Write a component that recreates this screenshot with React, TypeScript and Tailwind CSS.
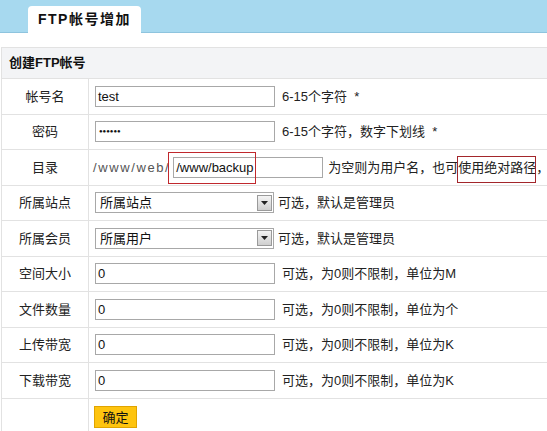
import React from "react";

const font = {
  fontFamily: '"Liberation Sans", "Noto Sans CJK SC", sans-serif',
};

function Label({ text }: { text: string }) {
  return (
    <div className="flex items-center justify-center border-r border-[#e2e2e2] text-[13px] text-[#222]">
      {text}
    </div>
  );
}

function TextInput({ value, w = "w-[180px]", password = false }: { value: string; w?: string; password?: boolean }) {
  return (
    <div className={`flex h-[21px] ${w} items-center border border-[#a8a8a8] bg-white px-[2px] text-[13px] text-[#111]`}>
      {password ? <span className="pl-[1px] text-[6px] tracking-[0px]">●●●●●●</span> : value}
    </div>
  );
}

function Select({ value }: { value: string }) {
  return (
    <div className="flex h-[21px] w-[179px] items-center justify-between border border-[#a8a8a8] bg-white pl-[4px] pr-[1px] text-[13px] text-[#111]">
      <span>{value}</span>
      <span className="flex h-[16px] w-[15px] items-center justify-center border border-[#9a9a9a] bg-gradient-to-b from-[#f4f4f4] to-[#cfcfcf]">
        <svg width="7" height="4" viewBox="0 0 7 4">
          <path d="M0 0h7L3.5 4z" fill="#222" />
        </svg>
      </span>
    </div>
  );
}

function Row({ label, children }: { label: string; children: React.ReactNode }) {
  return (
    <div className="grid h-[35.5px] grid-cols-[87px_1fr] border-b border-[#e2e2e2]">
      <Label text={label} />
      <div className="flex items-center pl-[6px] text-[13px] text-[#222]">{children}</div>
    </div>
  );
}

function Hint({ children }: { children: React.ReactNode }) {
  return <span className="ml-[7px] whitespace-nowrap">{children}</span>;
}

export default function App() {
  return (
    <div className="relative h-[431px] w-[547px] overflow-hidden bg-white" style={font}>
      <div className="flex h-[33px] items-end border-b border-[#8ec4de] bg-[#a7d9ef] pl-[28px]">
        <div className="-mb-px flex h-[27px] w-[113px] items-center justify-center rounded-t-[4px] bg-white text-[14px] font-bold tracking-[1.5px] text-[#111]">
          FTP帐号增加
        </div>
      </div>

      <div className="ml-[1px] mt-[14px] border-l border-t border-[#e2e2e2]">
        <div className="flex h-[31px] items-center border-b border-[#e2e2e2] bg-[#f3f4f6] pl-[7px] text-[13px] font-bold text-[#111]">
          创建FTP帐号
        </div>

        <Row label="帐号名">
          <TextInput value="test" />
          <Hint>6-15个字符 &nbsp;*</Hint>
        </Row>
        <Row label="密码">
          <TextInput value="" password />
          <Hint>6-15个字符，数字下划线 &nbsp;*</Hint>
        </Row>
        <Row label="目录">
          <span className="-ml-[2px] mr-[3px] tracking-[1.6px] text-[#555]">/www/web/</span>
          <TextInput value="/www/backup" w="w-[150px]" />
          <span className="ml-[5px] whitespace-nowrap">为空则为用户名，也可使用绝对路径，</span>
        </Row>
        <Row label="所属站点">
          <Select value="所属站点" />
          <span className="ml-[4px] whitespace-nowrap">可选，默认是管理员</span>
        </Row>
        <Row label="所属会员">
          <Select value="所属用户" />
          <span className="ml-[4px] whitespace-nowrap">可选，默认是管理员</span>
        </Row>
        <Row label="空间大小">
          <TextInput value="0" />
          <Hint>可选，为0则不限制，单位为M</Hint>
        </Row>
        <Row label="文件数量">
          <TextInput value="0" />
          <Hint>可选，为0则不限制，单位为个</Hint>
        </Row>
        <Row label="上传带宽">
          <TextInput value="0" />
          <Hint>可选，为0则不限制，单位为K</Hint>
        </Row>
        <Row label="下载带宽">
          <TextInput value="0" />
          <Hint>可选，为0则不限制，单位为K</Hint>
        </Row>
        <div className="grid h-[40px] grid-cols-[87px_1fr]">
          <div className="border-r border-[#e2e2e2]" />
          <div className="pl-[5px] pt-[6px]">
            <button className="h-[22px] w-[43px] border border-[#e0a400] bg-[#fec40f] text-[13px] text-[#111]">
              确定
            </button>
          </div>
        </div>
      </div>

      <div className="absolute left-[168px] top-[152px] h-[32px] w-[88px] border border-[#c0282d]" />
      <div className="absolute left-[457px] top-[156px] h-[27px] w-[79px] border border-[#a3262b]" />
    </div>
  );
}
